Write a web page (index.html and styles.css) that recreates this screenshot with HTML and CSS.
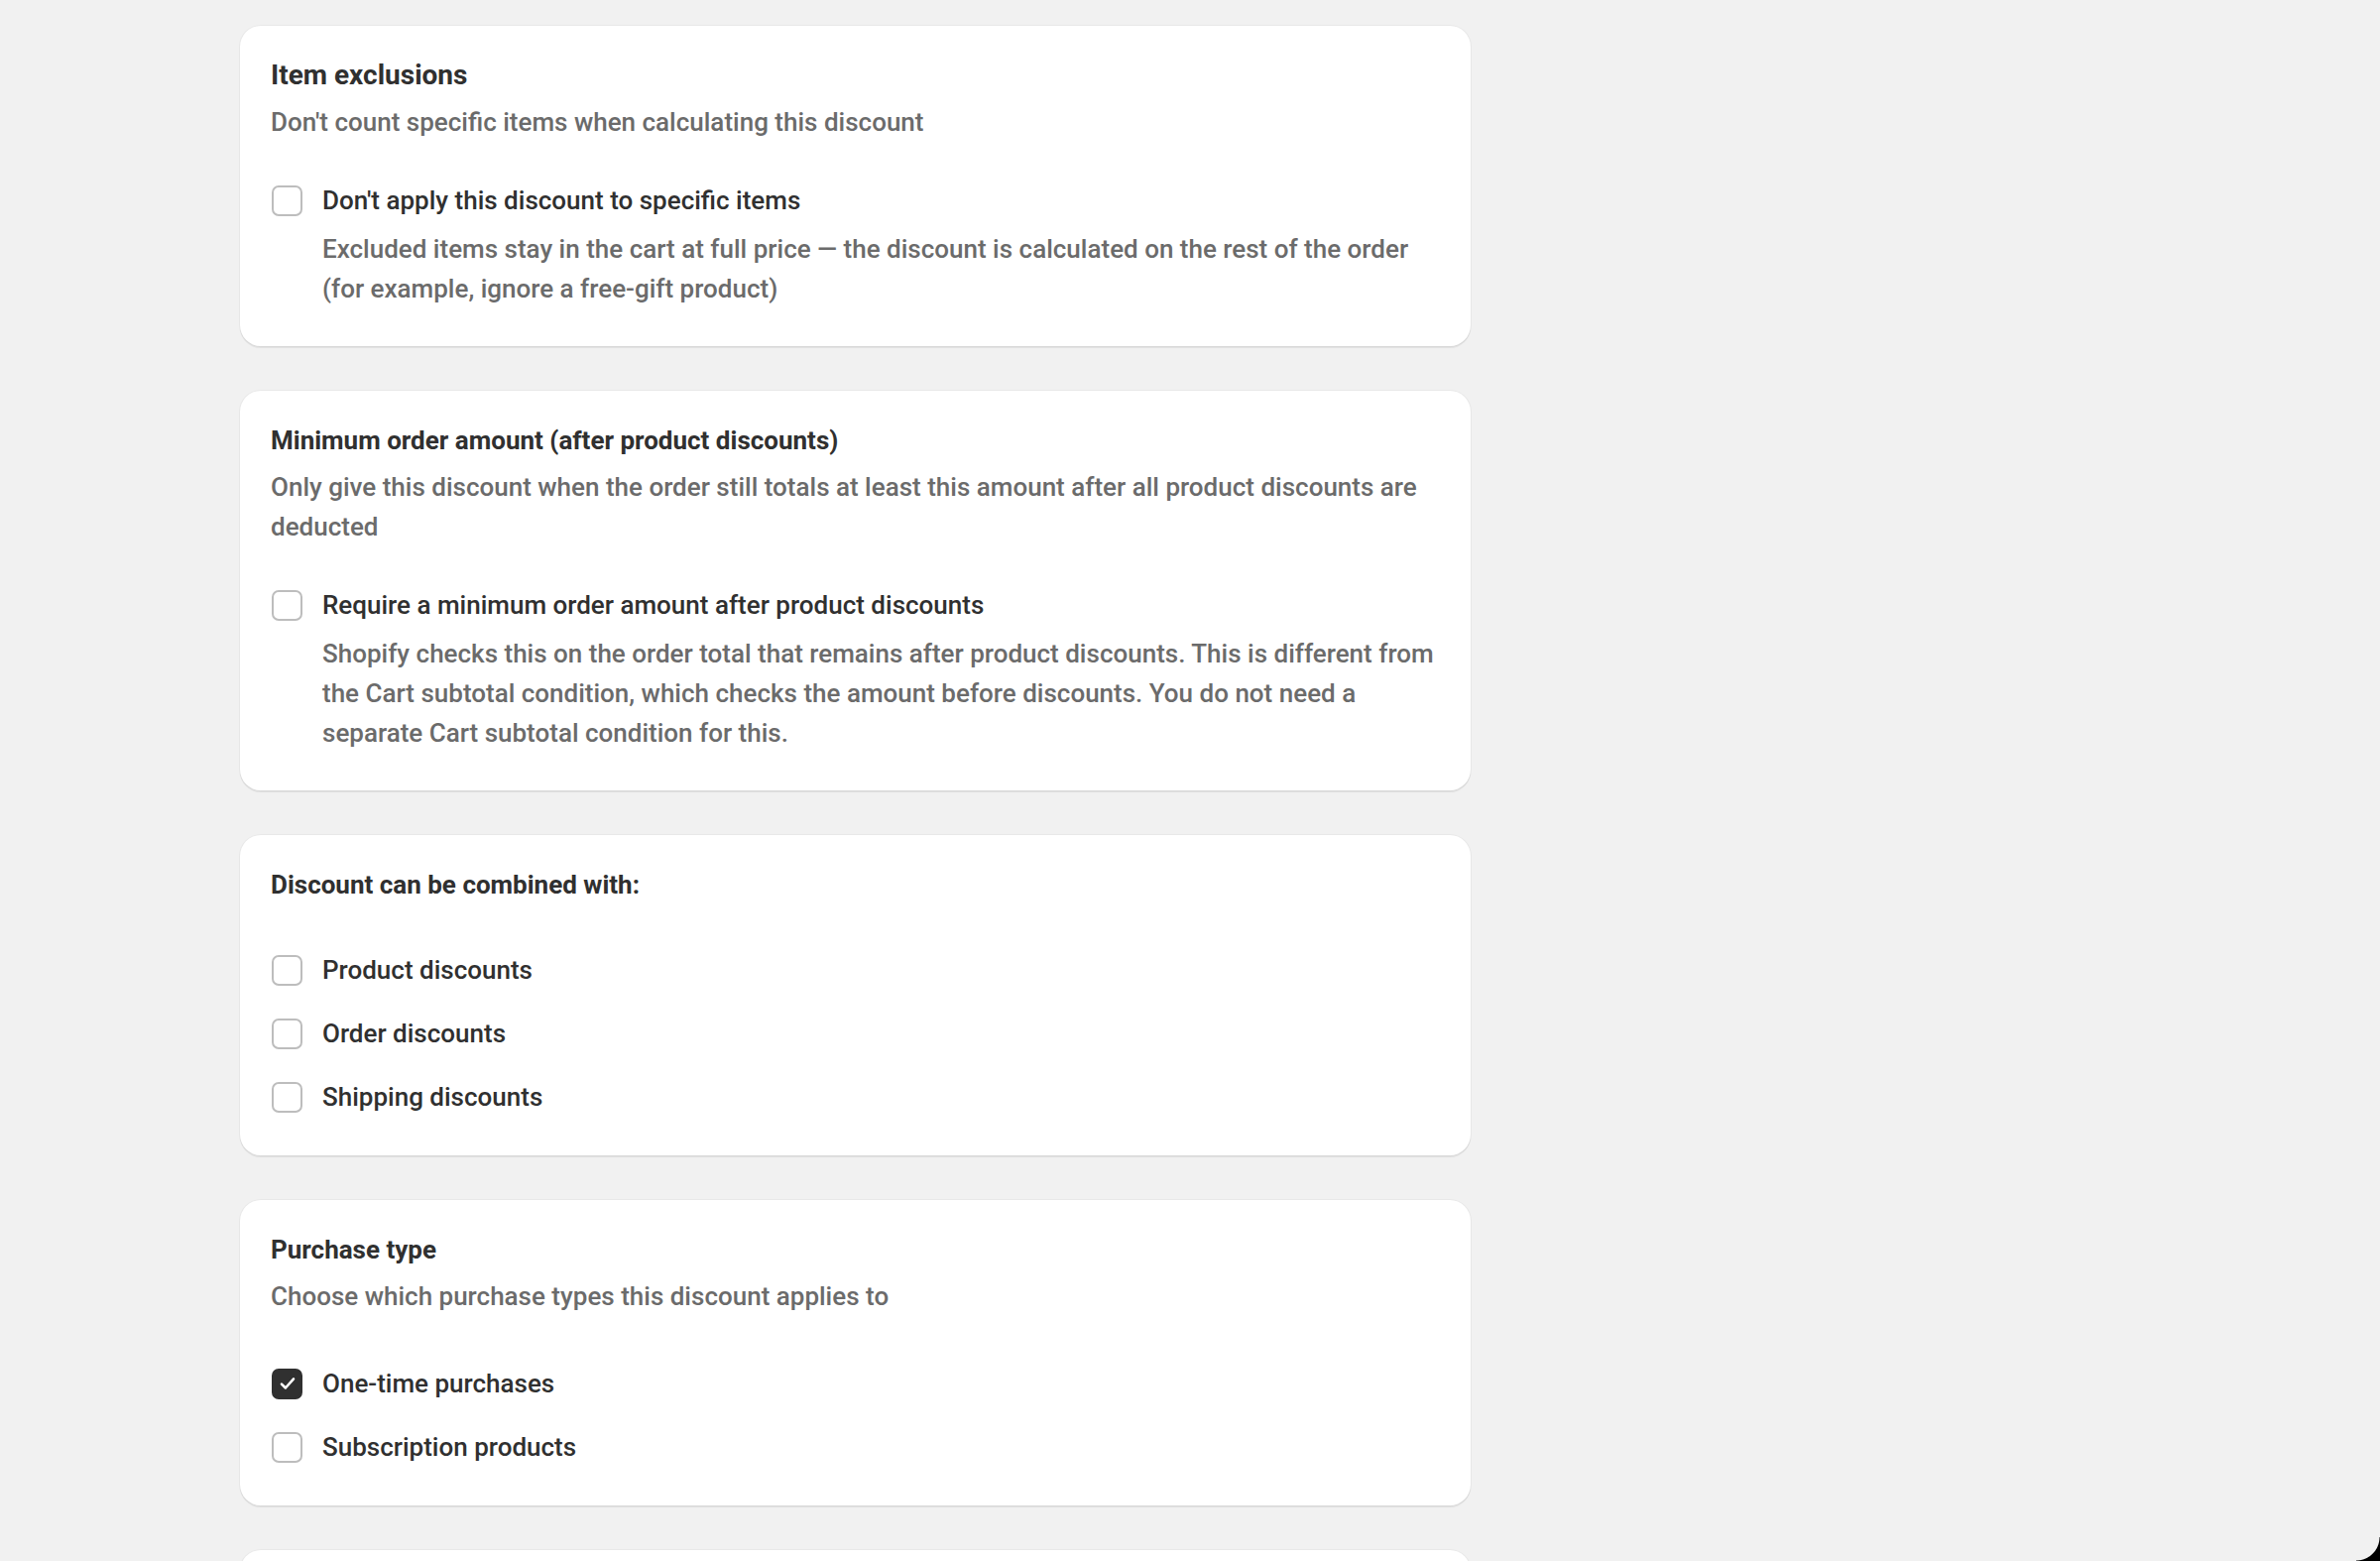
FILE: index.html
```html
<!DOCTYPE html>
<html lang="en">
<head>
<meta charset="utf-8">
<title>Discount settings</title>
<link rel="stylesheet" href="styles.css">
</head>
<body>
<main class="page">
  <section class="card">
    <h2 class="card-title card-title-lg">Item exclusions</h2>
    <p class="card-sub">Don't count specific items when calculating this discount</p>
    <div class="single">
      <label class="check-row">
        <span class="box"></span>
        <span class="label">Don't apply this discount to specific items</span>
      </label>
      <p class="help">Excluded items stay in the cart at full price — the discount is calculated on the rest of the order (for example, ignore a free-gift product)</p>
    </div>
  </section>

  <section class="card">
    <h2 class="card-title">Minimum order amount (after product discounts)</h2>
    <p class="card-sub">Only give this discount when the order still totals at least this amount after all product discounts are deducted</p>
    <div class="single">
      <label class="check-row">
        <span class="box"></span>
        <span class="label">Require a minimum order amount after product discounts</span>
      </label>
      <p class="help">Shopify checks this on the order total that remains after product discounts. This is different from the Cart subtotal condition, which checks the amount before discounts. You do not need a separate Cart subtotal condition for this.</p>
    </div>
  </section>

  <section class="card">
    <h2 class="card-title">Discount can be combined with:</h2>
    <div class="list">
      <label class="check-row"><span class="box"></span><span class="label">Product discounts</span></label>
      <label class="check-row"><span class="box"></span><span class="label">Order discounts</span></label>
      <label class="check-row"><span class="box"></span><span class="label">Shipping discounts</span></label>
    </div>
  </section>

  <section class="card">
    <h2 class="card-title">Purchase type</h2>
    <p class="card-sub">Choose which purchase types this discount applies to</p>
    <div class="list">
      <label class="check-row">
        <span class="box checked"><svg viewBox="0 0 20 20" width="22" height="22"><path d="M4.5 10.5l3.6 3.6L15.5 5.8" fill="none" stroke="#fff" stroke-width="2.3" stroke-linecap="round" stroke-linejoin="round"/></svg></span>
        <span class="label">One-time purchases</span>
      </label>
      <label class="check-row"><span class="box"></span><span class="label">Subscription products</span></label>
    </div>
  </section>

  <section class="card card-tall"></section>
</main>
<div class="corner"></div>
</body>
</html>
```

FILE: styles.css
```css
html, body {
  margin: 0;
  padding: 0;
  background: #f1f1f1;
}

body {
  font-family: Roboto, "Liberation Sans", sans-serif;
  color: #303030;
  overflow: hidden;
}

.page {
  display: flex;
  flex-direction: column;
  gap: 45px;
  width: 1241px;
  padding: 26px 0 0 242px;
}

.card {
  background: #ffffff;
  border-radius: 21px;
  padding: 32px 31px 38px 31px;
  box-shadow: 0 0 0 1px rgba(0, 0, 0, 0.035), 0 2px 1px rgba(0, 0, 0, 0.07);
}

.card-tall {
  height: 300px;
}

.card-title {
  margin: 0;
  font-size: 26px;
  line-height: 36px;
  font-weight: 700;
  color: #303030;
}

.card-title-lg {
  font-size: 28px;
}

.card-sub {
  margin: 9px 0 0 0;
  font-size: 26px;
  line-height: 40px;
  font-weight: 500;
  color: #6b6b6b;
}

.single {
  margin-top: 39px;
}

.list {
  margin: 48px 0 1px 0;
  display: flex;
  flex-direction: column;
  gap: 24px;
}

.check-row {
  display: flex;
  align-items: center;
  gap: 20px;
  padding-left: 1px;
}

.box {
  width: 31px;
  height: 31px;
  box-sizing: border-box;
  border: 2px solid #bdbdbd;
  border-radius: 7px;
  background: #fff;
  flex: none;
  display: flex;
  align-items: center;
  justify-content: center;
}

.box.checked {
  background: #303030;
  border-color: #303030;
}

.label {
  font-size: 26px;
  line-height: 40px;
  font-weight: 500;
  color: #303030;
}

.help {
  margin: 9px 0 0 52px;
  font-size: 26px;
  line-height: 40px;
  font-weight: 500;
  color: #6b6b6b;
}

.corner {
  position: fixed;
  right: 0;
  bottom: 0;
  width: 24px;
  height: 24px;
  background: radial-gradient(circle at 0 0, transparent 23px, #000 24px);
}
```
